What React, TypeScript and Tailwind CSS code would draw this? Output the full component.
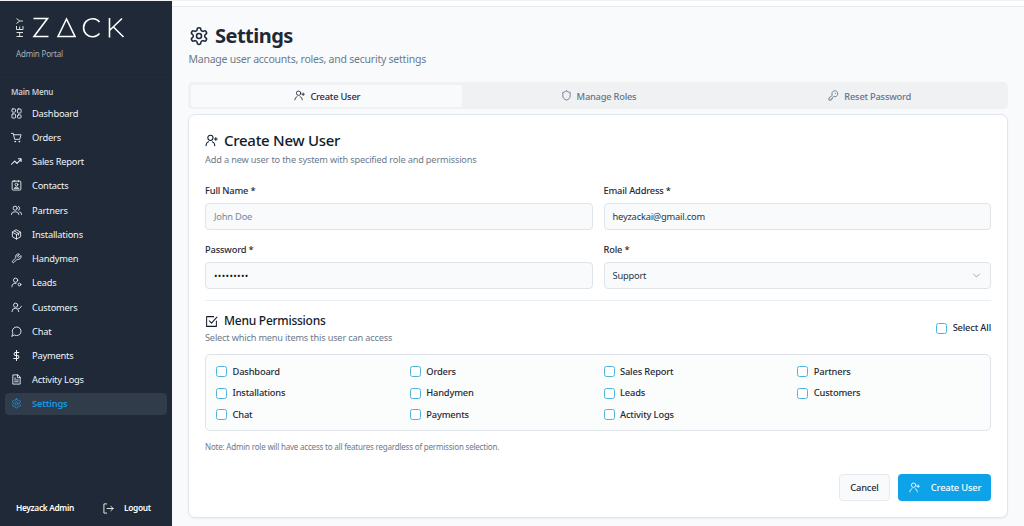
import type { ReactNode } from "react";

type IconProps = { className?: string; children?: ReactNode };

function Icon({ className = "size-[11px]", children }: IconProps) {
  return (
    <svg viewBox="0 0 24 24" fill="none" stroke="currentColor" strokeWidth="1.9" strokeLinecap="round" strokeLinejoin="round" className={`shrink-0 ${className}`}>
      {children}
    </svg>
  );
}

const gear = (
  <>
    <path d="M12.22 2h-.44a2 2 0 0 0-2 2v.18a2 2 0 0 1-1 1.73l-.43.25a2 2 0 0 1-2 0l-.15-.08a2 2 0 0 0-2.73.73l-.22.38a2 2 0 0 0 .73 2.73l.15.1a2 2 0 0 1 1 1.72v.51a2 2 0 0 1-1 1.74l-.15.09a2 2 0 0 0-.73 2.73l.22.38a2 2 0 0 0 2.73.73l.15-.08a2 2 0 0 1 2 0l.43.25a2 2 0 0 1 1 1.73V20a2 2 0 0 0 2 2h.44a2 2 0 0 0 2-2v-.18a2 2 0 0 1 1-1.73l.43-.25a2 2 0 0 1 2 0l.15.08a2 2 0 0 0 2.73-.73l.22-.39a2 2 0 0 0-.73-2.73l-.15-.08a2 2 0 0 1-1-1.74v-.5a2 2 0 0 1 1-1.74l.15-.09a2 2 0 0 0 .73-2.73l-.22-.38a2 2 0 0 0-2.73-.73l-.15.08a2 2 0 0 1-2 0l-.43-.25a2 2 0 0 1-1-1.73V4a2 2 0 0 0-2-2z" />
    <circle cx="12" cy="12" r="3" />
  </>
);
const userPlus = (
  <>
    <circle cx="10" cy="7" r="4.800" />
    <path d="M2 21.500v-1a7 7 0 0 1 4.500-6M13.500 14.500a7 7 0 0 1 4.500 6v1M20 6.500V12M17.300 9.250h5.400" />
  </>
);
const wrench = <path d="M14.700 6.300a1 1 0 0 0 0 1.400l1.600 1.600a1 1 0 0 0 1.400 0l3.770-3.770a6 6 0 0 1-7.940 7.940l-6.910 6.910a2.120 2.120 0 0 1-3-3l6.910-6.910a6 6 0 0 1 7.940-7.940l-3.760 3.760z" />;

const menu: { label: string; icon: ReactNode; active?: boolean }[] = [
  {
    label: "Dashboard",
    icon: (
      <>
        <rect x="2" y="2" width="8" height="7" rx="2" />
        <rect x="14" y="2" width="8" height="9" rx="2" />
        <rect x="2" y="13" width="8" height="9" rx="2" />
        <rect x="14" y="15" width="8" height="7" rx="2" />
      </>
    ),
  },
  {
    label: "Orders",
    icon: (
      <>
        <path d="M1 3h4l3 13h11l3-10H6" />
        <circle cx="9" cy="21" r="1" />
        <circle cx="18" cy="21" r="1" />
      </>
    ),
  },
  { label: "Sales Report", icon: <path strokeWidth="2.300" d="M1 18l7-7 5 5 9-9M16 6h6v6" /> },
  {
    label: "Contacts",
    icon: (
      <>
        <rect x="2.500" y="2.500" width="19" height="19.500" rx="2" />
        <circle cx="12" cy="10" r="3" />
        <path d="M7 17.500c1-3 9-3 10 0zM8 1v3M16 1v3" />
      </>
    ),
  },
  {
    label: "Partners",
    icon: (
      <>
        <circle cx="9" cy="7" r="4.500" />
        <path d="M1 21v-1a6 6 0 0 1 6-5h4a6 6 0 0 1 6 5v1M16 3a4.500 4.500 0 0 1 0 8.500M19 15a5 5 0 0 1 4 5v1" />
      </>
    ),
  },
  {
    label: "Installations",
    icon: <path d="M12 2l9 5v10l-9 5-9-5V7zM3 7l9 5 9-5M12 12v10M7.500 4.500l9 5v4" />,
  },
  { label: "Handymen", icon: wrench },
  {
    label: "Leads",
    icon: (
      <>
        <circle cx="10" cy="7" r="4.600" />
        <path d="M2 21.500v-1a7 7 0 0 1 5-6.500h4" />
        <circle cx="18.500" cy="16.500" r="3" />
      </>
    ),
  },
  {
    label: "Customers",
    icon: (
      <>
        <circle cx="10" cy="7" r="4.600" />
        <path d="M2 21a7.500 7.500 0 0 1 15 0M16 13l2 2 5-6" />
      </>
    ),
  },
  { label: "Chat", icon: <path d="M7.900 20A9.500 9.500 0 1 0 4 16.100L2 22z" /> },
  { label: "Payments", icon: <path strokeWidth="2.300" d="M12 1v22M17 5.500H9.500a3.300 3.300 0 0 0 0 6.500h5a3.300 3.300 0 0 1 0 6.500H6" /> },
  { label: "Activity Logs", icon: <path d="M14.500 2H4v20h16V7.500zM14 2v6h6M8 9h2M8 13h8M8 17h8" /> },
  { label: "Settings", icon: gear, active: true },
];

const permissions = ["Dashboard", "Orders", "Sales Report", "Partners", "Installations", "Handymen", "Leads", "Customers", "Chat", "Payments", "Activity Logs"];

function Sidebar() {
  return (
    <aside className="mt-px flex h-[525px] w-[172px] shrink-0 flex-col bg-[#1f2937] text-[#f1f5f9]">
      <div className="h-[77px] border-b border-[#222d3b] pl-4 pt-[15px]">
        <svg viewBox="0 0 110 22" className="h-[22px] w-[110px]" fill="none" stroke="#fff" strokeWidth="1.600">
          <path strokeWidth="0.850" d="M.5 20.500h6.500M.5 16.500h6.500M3.700 16.500v4M.5 13.500v-3.500M3.700 13.500v-3M7 13.500v-3.500M.5 13.500H7M.5 7.500l3.200-2.500-3.200-2.500M3.700 5H7" />
          <path d="M17.500 2.500h14L18 20.500h14.500M42 20.500L50.500 3 59 20.500zM83.500 6a9 9 0 1 0 0 11.500M93.500 2v19.500M106 2.500L94 14M97.500 11L107.500 21" />
        </svg>
        <p className="mt-[10px] text-[8px] leading-[12px] tracking-[-0.180px] text-[#aab1bc]">Admin Portal</p>
      </div>
      <p className="mt-[8px] pl-[11px] text-[8px] font-semibold leading-[12px] tracking-[-0.180px] text-[#c5cbd3]">Main Menu</p>
      <nav className="mt-[4.500px] flex flex-col gap-[2.700px] pl-[5px] pr-[5.500px]">
        {menu.map((m) => (
          <a key={m.label} className={`flex h-[21.540px] items-center gap-[10.500px] rounded-[4px] pl-[5.500px] text-[9.300px] tracking-[-0.200px] ${m.active ? "bg-[#303c4a] font-semibold text-[#1697e0]" : ""}`}>
            <Icon>{m.icon}</Icon>
            <span className="pt-px">{m.label}</span>
          </a>
        ))}
      </nav>
      <div className="mt-auto flex h-[36px] items-center pl-4 text-[8.300px] font-semibold tracking-[-0.300px] text-white">
        <span className="w-[87px] pt-px">Heyzack Admin</span>
        <Icon className="size-[11px]"><path d="M8 2H2v20h6M9 12h13M17 7l5 5-5 5" /></Icon>
        <span className="ml-[10px] pt-px">Logout</span>
      </div>
    </aside>
  );
}

function Check({ label }: { label: string }) {
  return (
    <label className="flex items-center gap-[5.500px] text-[9.300px] font-medium leading-[14px] tracking-[-0.160px]">
      <span className="size-[11px] rounded-[2.500px] border border-[#4fb4dd] bg-white" />
      {label}
    </label>
  );
}

function Field({ label, children }: { label: string; children: ReactNode }) {
  return (
    <div>
      <p className="text-[9.300px] font-medium leading-[12px] tracking-[-0.180px]">{label}</p>
      <div className="mt-[6px] flex h-[27px] items-center justify-between rounded-[4px] border border-[#dfe4e9] bg-[#f8fafc] px-2 text-[9.300px] tracking-[-0.200px] text-[#2b3543]">{children}</div>
    </div>
  );
}

export default function App() {
  return (
    <div className="flex h-[526px] w-[1024px] overflow-hidden bg-[#f1f2f4] font-['Noto_Sans','Open_Sans',sans-serif] text-[#1f2937]">
      <Sidebar />
      <div className="mt-px flex flex-1 flex-col bg-[#f9fafc]">
        <div className="h-[6px] border-b border-[#e8ebee] bg-white" />
        <main className="pl-4 pr-4 pt-[16px]">
          <h1 className="flex h-[25px] items-center gap-[6px] pl-px text-[20px] font-bold tracking-[-0.520px]">
            <Icon className="size-[20px]">{gear}</Icon>
            <span className="pt-px">Settings</span>
          </h1>
          <p className="mt-[3px] pl-[0.500px] text-[10.500px] leading-[16px] tracking-[-0.230px] text-[#6b7a8b]">Manage user accounts, roles, and security settings</p>
          <div className="mt-[15px] grid h-[27px] grid-cols-3 rounded-[5px] bg-[#f0f1f3] p-[2.500px] text-[9.300px] font-medium tracking-[-0.220px] text-[#64748b]">
            <div className="flex items-center justify-center gap-[5px] rounded-[3px] bg-[#f9fafc] pl-[2px] text-[#1f2937]"><Icon>{userPlus}</Icon><span className="pt-[2px]">Create User</span></div>
            <div className="flex items-center justify-center gap-[5px] pl-px"><Icon><path d="M12 2c3 2 5 3 8 3v8c0 5-3.500 7.500-8 9-4.500-1.500-8-4-8-9V5c3 0 5-1 8-3z" /></Icon><span className="pt-[2px]">Manage Roles</span></div>
            <div className="flex items-center justify-center gap-[5px]"><Icon><path d="M2 18v4h5v-3h3v-3l2-2a6.500 6.500 0 1 0-3-3zM16 7.500h.5" /></Icon><span className="pt-[2px]">Reset Password</span></div>
          </div>
          <section className="mt-[5px] h-[404px] rounded-[7px] border border-[#e1e6ec] bg-white px-4 pt-[16px] shadow-xs">
            <h2 className="flex h-[18px] items-center gap-[6px] text-[15px] font-medium tracking-[-0.280px] text-[#111c2b]"><Icon className="size-[13px]">{userPlus}</Icon>Create New User</h2>
            <p className="mt-[4px] text-[9.200px] leading-[14px] tracking-[-0.160px] text-[#6b7a8b]">Add a new user to the system with specified role and permissions</p>
            <div className="mt-[18px] grid grid-cols-2 gap-x-[11px] gap-y-[14px]">
              <Field label="Full Name *"><span className="text-[#7b8796]">John Doe</span></Field>
              <Field label="Email Address *">heyzackai@gmail.com</Field>
              <Field label="Password *"><span className="tracking-[0.350px] text-[#111827]">•••••••••</span></Field>
              <Field label="Role *">Support<Icon className="mr-px size-[9px] text-[#7b8796]"><path d="M4 8l8 8 8-8" /></Icon></Field>
            </div>
            <div className="mt-[11px] flex justify-between border-t border-[#edf0f3] pt-[12px]">
              <div>
                <h3 className="flex h-[16px] items-center gap-[6px] text-[12px] font-medium tracking-[-0.250px] text-[#111c2b]"><Icon className="size-[13px]"><path d="M21 11v10H3V3h13M8 11l4 4L22 4" /></Icon>Menu Permissions</h3>
                <p className="mt-[2px] text-[9.200px] leading-[14px] tracking-[-0.170px] text-[#6b7a8b]">Select which menu items this user can access</p>
              </div>
              <div className="mt-[8px]"><Check label="Select All" /></div>
            </div>
            <div className="mt-[9px] grid h-[77px] grid-cols-4 content-start gap-x-[11px] gap-y-[7.500px] rounded-[5px] border border-[#dde3e9] bg-[#fbfcfc] px-[10px] pt-[9.500px]">
              {permissions.map((p) => <Check key={p} label={p} />)}
            </div>
            <p className="mt-[10px] text-[8px] leading-[12px] tracking-[-0.200px] text-[#6b7a8b]">Note: Admin role will have access to all features regardless of permission selection.</p>
            <div className="mt-[21px] flex justify-end gap-[8px] text-[9.300px] font-medium tracking-[-0.180px]">
              <button className="h-[27px] w-[51px] rounded-[4px] border border-[#e6eaee] bg-[#f9fafc]">Cancel</button>
              <button className="flex h-[27px] w-[93px] items-center justify-center gap-[11px] rounded-[4px] bg-[#0ea2e9] pl-px text-white"><Icon>{userPlus}</Icon>Create User</button>
            </div>
          </section>
        </main>
      </div>
    </div>
  );
}
